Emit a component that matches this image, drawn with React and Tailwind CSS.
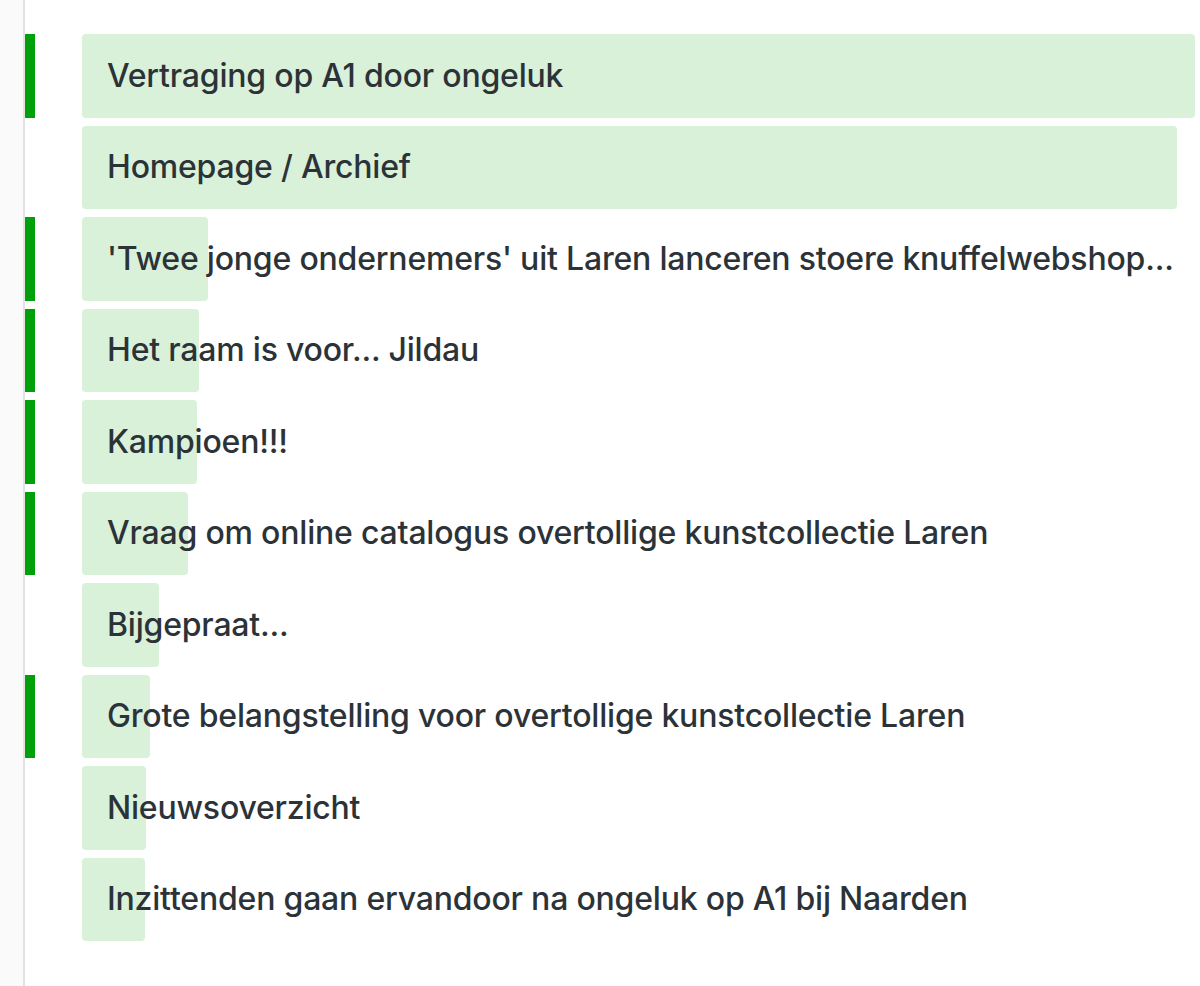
import React from 'react';

const rows = [
  { title: 'Vertraging op A1 door ongeluk', bar: 1113, mark: true },
  { title: 'Homepage / Archief', bar: 1095, mark: false },
  { title: "'Twee jonge ondernemers' uit Laren lanceren stoere knuffelwebshop...", bar: 126, mark: true },
  { title: 'Het raam is voor... Jildau', bar: 117, mark: true },
  { title: 'Kampioen!!!', bar: 115, mark: true },
  { title: 'Vraag om online catalogus overtollige kunstcollectie Laren', bar: 106, mark: true },
  { title: 'Bijgepraat...', bar: 77, mark: false },
  { title: 'Grote belangstelling voor overtollige kunstcollectie Laren', bar: 68, mark: true },
  { title: 'Nieuwsoverzicht', bar: 64, mark: false },
  { title: 'Inzittenden gaan ervandoor na ongeluk op A1 bij Naarden', bar: 63, mark: false },
];

export default function App() {
  return (
    <div className="flex h-[986px] w-[1200px] overflow-hidden bg-white" style={{ fontFamily: 'Inter, "Open Sans", sans-serif' }}>
      <div className="w-[25px] shrink-0 border-r-2 border-[#e2e2e2] bg-[#fafafa]" />
      <div className="flex flex-1 flex-col gap-[8px] pt-[34px]">
        {rows.map((row) => (
          <div key={row.title} className="flex h-[83.5px] items-stretch">
            <div className={`w-[10px] shrink-0 ${row.mark ? 'bg-[#00a00a]' : ''}`} />
            <div className="relative ml-[47px] flex flex-1 items-center">
              <div className="absolute left-0 top-0 h-full rounded-[4px] bg-[#d9f1d9]" style={{ width: row.bar }} />
              <span className="relative whitespace-nowrap pl-[25px] text-[32px] font-medium tracking-[-0.2px] text-[#2c3338]">{row.title}</span>
            </div>
          </div>
        ))}
      </div>
    </div>
  );
}
